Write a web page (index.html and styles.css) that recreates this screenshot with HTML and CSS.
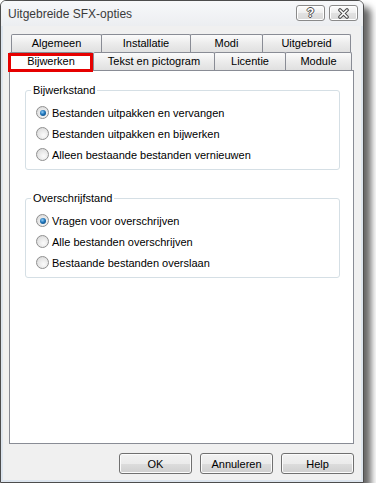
FILE: index.html
```html
<!DOCTYPE html>
<html lang="nl">
<head>
    <meta charset="UTF-8">
    <title>Uitgebreide SFX-opties</title>
    <link rel="stylesheet" href="styles.css">
</head>
<body>

    <div class="window">
        <div class="titlebar">
            <span class="title">Uitgebreide SFX-opties</span>
            <div class="caption-buttons">
                <button class="cap-btn help-btn">?</button>
                <button class="cap-btn close-btn">
                    <svg width="13" height="11" viewBox="0 0 13 11">
                        <path d="M3 2 L10 9 M10 2 L3 9" stroke="#4a4a4a" stroke-width="3.6" stroke-linecap="round"/>
                        <path d="M3 2 L10 9 M10 2 L3 9" stroke="#fff" stroke-width="1.6" stroke-linecap="round"/>
                    </svg>
                </button>
            </div>
        </div>

        <div class="client">
            <!-- Tabbladen, twee rijen -->
            <div class="tabs">
                <div class="tab-row back">
                    <div class="tab tab-algemeen">Algemeen</div>
                    <div class="tab tab-installatie">Installatie</div>
                    <div class="tab tab-modi">Modi</div>
                    <div class="tab tab-uitgebreid">Uitgebreid</div>
                </div>
                <div class="tab-row front">
                    <div class="tab tab-bijwerken active">Bijwerken<span class="highlight"></span></div>
                    <div class="tab tab-tekst">Tekst en pictogram</div>
                    <div class="tab tab-licentie">Licentie</div>
                    <div class="tab tab-module">Module</div>
                </div>
            </div>

            <div class="panel">
                <fieldset class="group first">
                    <legend>Bijwerkstand</legend>
                    <label class="radio"><span class="dot checked"></span>Bestanden uitpakken en vervangen</label>
                    <label class="radio"><span class="dot"></span>Bestanden uitpakken en bijwerken</label>
                    <label class="radio"><span class="dot"></span>Alleen bestaande bestanden vernieuwen</label>
                </fieldset>

                <fieldset class="group second">
                    <legend>Overschrijfstand</legend>
                    <label class="radio"><span class="dot checked"></span>Vragen voor overschrijven</label>
                    <label class="radio"><span class="dot"></span>Alle bestanden overschrijven</label>
                    <label class="radio"><span class="dot"></span>Bestaande bestanden overslaan</label>
                </fieldset>
            </div>

            <div class="buttons">
                <button class="btn">OK</button>
                <button class="btn">Annuleren</button>
                <button class="btn">Help</button>
            </div>
        </div>
    </div>

</body>
</html>
```

FILE: styles.css
```css
body {
    margin: 0;
    background: #fff;
    font-family: "Liberation Sans", Arial, sans-serif;
    font-size: 11px;
    color: #000;
}

/* Venster */
.window {
    width: 362px;
    height: 481px;
    border: 1px solid #4d4d4d;
    border-radius: 6px 6px 0 0;
    background: #f0f0f0;
    box-shadow: inset 0 0 0 2px #dde5ee, 7px 7px 7px rgba(0, 0, 0, 0.6);
}

.titlebar {
    height: 25px;
    display: flex;
    align-items: center;
    justify-content: space-between;
    padding: 0 5px 0 7px;
    border-radius: 5px 5px 0 0;
    background: linear-gradient(#f7f8fa, #eceef1);
}

.title {
    font-size: 12px;
    color: #3a3a3a;
    padding-top: 1px;
}

.caption-buttons {
    display: flex;
    gap: 4px;
    align-self: flex-start;
    margin-top: 4px;
}

.cap-btn {
    width: 29px;
    height: 16px;
    padding: 0;
    border: 1px solid #8a8a8a;
    border-radius: 3px;
    background: linear-gradient(#fdfdfd, #eeeeee 50%, #e2e2e2 50%, #d9d9d9);
    display: flex;
    align-items: center;
    justify-content: center;
    box-shadow: inset 0 0 0 1px #fff;
}

.help-btn {
    font-family: "Liberation Sans", Arial, sans-serif;
    font-weight: bold;
    font-size: 12px;
    line-height: 14px;
    color: #fff;
    text-shadow: 1px 0 0 #4a4a4a, -1px 0 0 #4a4a4a, 0 1px 0 #4a4a4a, 0 -1px 0 #4a4a4a;
}

.client {
    padding: 8px 9px 0 8px;
}

/* Tabbladen */
.tab-row {
    display: flex;
}

.tab-row.back {
    margin-left: 2px;
}

.tab {
    box-sizing: border-box;
    height: 18px;
    line-height: 16px;
    text-align: center;
    border: 1px solid #898c95;
    border-bottom: none;
    border-radius: 2px 2px 0 0;
    background: linear-gradient(#fbfbfb, #ececec 50%, #e0e0e0);
    margin-left: -1px;
}

.tab:first-child {
    margin-left: 0;
}

.tab-algemeen { width: 91px; }
.tab-installatie { width: 90px; }
.tab-modi { width: 73px; }
.tab-uitgebreid { width: 89px; }

.tab-bijwerken { width: 84px; }
.tab-tekst { width: 122px; margin-left: 0; }
.tab-licentie { width: 72px; }
.tab-module { width: 67px; }

.tab.active {
    position: relative;
    height: 19px;
    background: #fff;
    z-index: 1;
}

/* rood kader als markering */
.highlight {
    position: absolute;
    left: -2px;
    top: 0;
    width: 85px;
    height: 19px;
    box-sizing: border-box;
    border: 3px solid #e60000;
}

.panel {
    box-sizing: border-box;
    width: 345px;
    height: 374px;
    margin-top: -1px;
    border: 1px solid #898c95;
    background: #fff;
    padding-top: 12px;
}

/* Groepsvakken */
.group {
    margin: 0 13px 0 15px;
    padding: 5px 0 4px 0;
    border: 1px solid #d5dfe5;
    border-radius: 3px;
}

.group.second {
    margin-top: 21px;
}

.group legend {
    margin-left: 5px;
    padding: 0 2px;
    line-height: 14px;
}

.radio {
    display: flex;
    align-items: center;
    height: 21px;
    padding-left: 10px;
}

.dot {
    box-sizing: border-box;
    width: 13px;
    height: 13px;
    margin-right: 3px;
    border: 1px solid #8f8f8f;
    border-radius: 50%;
    background: radial-gradient(circle at 60% 65%, #fbfbfb 0%, #e6e6e6 55%, #d2d2d2 100%);
    display: flex;
    align-items: center;
    justify-content: center;
}

.dot.checked::after {
    content: "";
    width: 6px;
    height: 6px;
    border-radius: 50%;
    background: radial-gradient(circle at 40% 35%, #8fcdfa 0%, #1f74b8 45%, #0b3f70 100%);
}

/* Knoppen onderaan */
.buttons {
    display: flex;
    justify-content: flex-end;
    gap: 8px;
    width: 345px;
    margin-top: 9px;
}

.btn {
    width: 73px;
    height: 21px;
    padding: 0;
    font-family: "Liberation Sans", Arial, sans-serif;
    font-size: 11px;
    color: #000;
    border: 1px solid #707070;
    border-radius: 3px;
    background: linear-gradient(#f2f2f2, #ebebeb 50%, #dddddd 50%, #cfcfcf);
    box-shadow: inset 0 0 0 1px #fbfbfb;
}
```
